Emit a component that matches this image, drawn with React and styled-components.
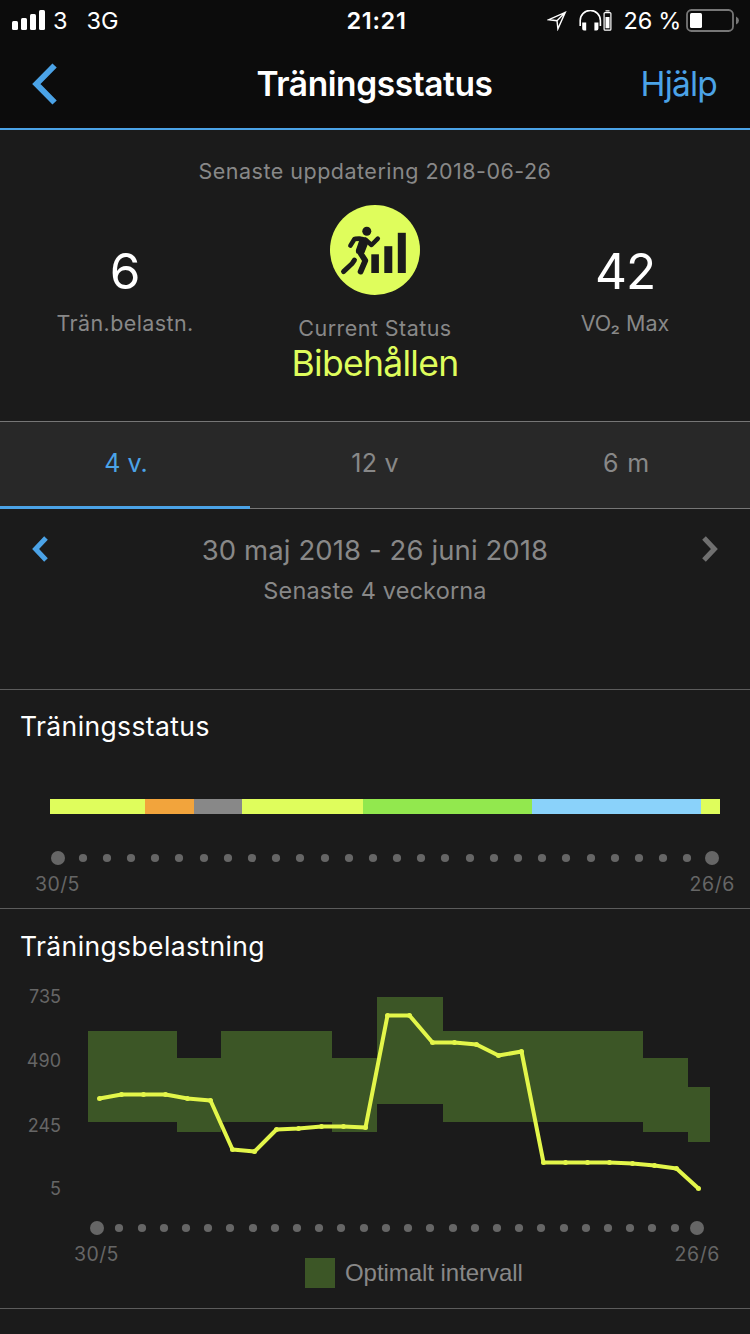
import React from "react";
import styled, { createGlobalStyle } from "styled-components";

const color = {
  page: "#1b1b1b",
  bar: "#0c0c0c",
  tab: "#282828",
  blue: "#4ba3e7",
  lime: "#dffd5c",
  grey: "#888888",
  dim: "#666666",
  line: "#5c5c5c",
  band: "#3c5626",
};

const GlobalStyle = createGlobalStyle`
  * { box-sizing: border-box; }
  body {
    margin: 0;
    background: ${color.page};
    font-family: Inter, "Liberation Sans", sans-serif;
    color: #fff;
  }
`;

const Screen = styled.main`
  display: flex;
  flex-direction: column;
  width: 750px;
  height: 1334px;
  overflow: hidden;
  background: ${color.page};
`;

const Text = styled.span`
  display: block;
  font-size: ${(p) => p.$size}px;
  line-height: ${(p) => p.$line}px;
  font-weight: ${(p) => p.$weight || 400};
  letter-spacing: ${(p) => p.$spacing || 0}px;
  color: ${(p) => p.$color || "#fff"};
  white-space: pre;
`;

const Header = styled.header`
  height: 130px;
  background: ${color.bar};
  border-bottom: 2px solid ${color.blue};
`;

const StatusBar = styled.div`
  display: grid;
  grid-template-columns: 1fr auto 1fr;
  height: 41px;
  padding: 0 11px 0 12px;
`;

const StatusSide = styled.div`
  display: flex;
  align-items: center;
  justify-content: ${(p) => (p.$end ? "flex-end" : "flex-start")};
`;

const Clock = styled(Text)`
  padding-left: 2px;
`;

const Signal = styled.svg`
  margin: 0 8px 2px 0;
`;

const Network = styled.div`
  margin-left: 19px;
`;

const LocationIcon = styled.svg`
  margin-right: 12px;
`;

const HeadphonesIcon = styled.svg`
  margin-right: 12px;
`;

const BatteryIcon = styled.svg`
  margin: 0 -1px 0 5px;
`;

const NavBar = styled.div`
  display: grid;
  grid-template-columns: 1fr auto 1fr;
  align-items: center;
  height: 86px;
  padding: 0 33px 0 32px;
`;

const NavEnd = styled.div`
  justify-self: end;
`;

const Summary = styled.section`
  height: 291px;
  padding-top: 25px;
  text-align: center;
`;

const Metrics = styled.div`
  display: grid;
  grid-template-columns: repeat(3, 250px);
`;

const Metric = styled.div`
  display: flex;
  flex-direction: column;
  align-items: center;
  padding-top: ${(p) => p.$top}px;
`;

const StatusBadge = styled.svg`
  margin-bottom: 20px;
`;

const Tabs = styled.nav`
  display: grid;
  grid-template-columns: repeat(3, 1fr);
  height: 88px;
  background: ${color.tab};
  border-top: 1px solid #767676;
  box-shadow: inset 0 -1px 0 #767676;
`;

const Tab = styled.div`
  display: flex;
  justify-content: center;
  padding-top: 21px;
  padding-left: ${(p) => p.$nudge || 0}px;
  border-bottom: 3px solid ${(p) => (p.$active ? color.blue : "transparent")};
`;

const Period = styled.section`
  display: grid;
  grid-template-columns: 48px 1fr 48px;
  height: 180px;
  padding: 21px 0 0;
`;

const PeriodArrow = styled.div`
  display: flex;
  justify-content: ${(p) => (p.$end ? "flex-start" : "flex-end")};
  padding-top: 6px;
`;

const PeriodLabel = styled.div`
  display: flex;
  flex-direction: column;
  align-items: center;
`;

const Panel = styled.section`
  height: ${(p) => p.$height}px;
  border-top: 1px solid ${color.line};
`;

const PanelTitle = styled.h2`
  margin: 0;
  padding: ${(p) => p.$top}px 0 0 20px;
  font-weight: 400;
`;

const StatusStrip = styled.div`
  display: flex;
  height: 15px;
  margin: 53px 30px 0 50px;
`;

const StripPart = styled.i`
  flex: ${(p) => p.$span} 0 0;
  background: ${(p) => p.$color};
`;

const Dots = styled.svg`
  display: block;
`;

const DateRange = styled.div`
  display: flex;
  justify-content: space-between;
  padding: ${(p) => p.$pad};
`;

const Plot = styled.div`
  display: flex;
  height: 222px;
  margin-top: 25px;
`;

const Axis = styled.div`
  display: flex;
  flex-direction: column;
  align-items: flex-end;
  gap: 40px;
  width: 61px;
  margin-top: -7px;
`;

const Legend = styled.div`
  display: flex;
  align-items: center;
  gap: 10px;
  margin: -11px 0 0 305px;
`;

const Swatch = styled.i`
  width: 30px;
  height: 30px;
  background: ${color.band};
`;

const LegendText = styled(Text)`
  font-family: "Liberation Sans", Arial, sans-serif;
`;

const strip = [
  [95, color.lime],
  [49, "#f2a43c"],
  [48, "#888888"],
  [121, color.lime],
  [169, "#92e84e"],
  [169, "#8ad2fa"],
  [19, color.lime],
];

const bands = [
  [88, 177, 1031, 1122],
  [177, 221, 1058, 1132],
  [221, 332, 1031, 1122],
  [332, 377, 1058, 1132],
  [377, 443, 997, 1104],
  [443, 643, 1031, 1122],
  [643, 688, 1058, 1132],
  [688, 710, 1087, 1142],
];

const load = [
  [99.5, 1098.5], [121.5, 1094.5], [143.5, 1094.5], [165.5, 1094.5], [187.5, 1098.5],
  [210.5, 1100.5], [232.5, 1149.5], [254.5, 1151.5], [276.5, 1129.5], [298.5, 1128.5],
  [321.5, 1126.5], [343.5, 1126.5], [365.5, 1127.5], [387.5, 1015.5], [409.5, 1015.5],
  [432.5, 1042.5], [454.5, 1042.5], [476.5, 1044.5], [498.5, 1055.5], [521.5, 1051.5],
  [543.5, 1162.5], [565.5, 1162.5], [587.5, 1162.5], [609.5, 1162.5], [632.5, 1163.5],
  [654.5, 1165.5], [676.5, 1168.5], [698.5, 1188.5],
];

function DayDots({ first, from, step, phase, last }) {
  return (
    <Dots width="750" height="14" fill={color.dim}>
      <circle cx={first} cy="7" r="7" />
      {Array.from({ length: 26 }, (_, i) => (
        <circle key={i} cx={from + Math.floor(i * step + phase)} cy="7" r="4.1" />
      ))}
      <circle cx={last} cy="7" r="7" />
    </Dots>
  );
}

function Status() {
  return (
    <StatusBar>
      <StatusSide>
        <Signal width="33" height="20" fill="#fff">
          <rect x="0" y="11" width="6" height="9" rx="1.5" />
          <rect x="9" y="8" width="6" height="12" rx="1.5" />
          <rect x="18" y="4" width="6" height="16" rx="1.5" />
          <rect x="27" y="0" width="6" height="20" rx="1.5" />
        </Signal>
        <Text $size={23.5} $line={41}>3</Text>
        <Network>
          <Text $size={23.5} $line={41}>3G</Text>
        </Network>
      </StatusSide>
      <Clock $size={23.5} $line={41} $weight={600} $spacing={0.7}>21:21</Clock>
      <StatusSide $end>
        <LocationIcon width="20" height="20" fill="none" stroke="#fff" strokeWidth="1.4">
          <path d="M18.3 1.3 1.8 8.7l8.2 1 .9 8.2z M18.3 1.3 10 9.7" strokeLinejoin="miter" />
        </LocationIcon>
        <HeadphonesIcon width="33" height="21">
          <path d="M1.2 16V10.5a9.8 9.8 0 0 1 20.2 0V16" fill="none" stroke="#fff" strokeWidth="1.6" />
          <path d="M3.2 12.5h4v8h-2.2q-1.8 0-1.8-2zM19.4 12.5h-4v8h2.2q1.8 0 1.8-2z" fill="#fff" />
          <rect x="25.1" y="2.6" width="6.8" height="17.6" rx="1" fill="none" stroke="#fff" strokeWidth="1.2" />
          <path d="M26.5 7h4v11.3h-4zM26.5 .3h4v1.3h-4z" fill="#fff" />
        </HeadphonesIcon>
        <Text $size={23.5} $line={41} $spacing={-0.3}>26 %</Text>
        <BatteryIcon width="54" height="24">
          <rect x="1" y="1" width="46" height="21" rx="4.5" fill="none" stroke="#777" strokeWidth="1.8" />
          <rect x="4" y="4" width="12" height="15" rx="1.5" fill="#fff" />
          <path d="M50 7.5q3 1.5 3 4t-3 4z" fill="#777" />
        </BatteryIcon>
      </StatusSide>
    </StatusBar>
  );
}

function Chevron({ w, h, path, width, stroke }) {
  return (
    <svg width={w} height={h} fill="none" stroke={stroke} strokeWidth={width}>
      <path d={path} />
    </svg>
  );
}

function Badge() {
  return (
    <StatusBadge width="90" height="90" viewBox="0 0 90 90">
      <circle cx="45" cy="45" r="45" fill={color.lime} />
      <g fill={color.page}>
        <circle cx="36.8" cy="26.3" r="4.5" />
        <path d="M24.5 31.8q6.5-1 11.5 1 3.6 1.8 2.4 5L34.4 48l-7.8.5q-1.6-2.6.2-6l2.2-6.5z" />
        <rect x="41.3" y="49.3" width="7.6" height="18.7" />
        <rect x="54.3" y="41.2" width="8" height="26.8" />
        <rect x="67.8" y="27.8" width="8" height="40.2" />
      </g>
      <g fill="none" stroke={color.page} strokeLinecap="round" strokeLinejoin="round">
        <path d="M20.4 40.6l4.1-6.6 5.5-.2" strokeWidth="4.6" />
        <path d="M35.5 34.7l6 5.3 6.3-6.3" strokeWidth="4.5" />
        <path d="M29.8 47l5.5 8.6-4.7 11" strokeWidth="5.8" />
        <path d="M24.5 55l-2.6 3.8-8.4 7.8" strokeWidth="4.9" />
      </g>
    </StatusBadge>
  );
}

export default function App() {
  return (
    <Screen>
      <GlobalStyle />
      <Header>
        <Status />
        <NavBar>
          <Chevron w={26} h={42} path="M22.6 2.5 4.4 21l18.2 18.5" width={6} stroke={color.blue} />
          <Text $size={33.5} $line={60} $weight={600} $spacing={-0.42}>Träningsstatus</Text>
          <NavEnd>
            <Text $size={33.5} $line={60} $spacing={-0.8} $color={color.blue}>Hjälp</Text>
          </NavEnd>
        </NavBar>
      </Header>

      <Summary>
        <Text $size={21.5} $line={32} $spacing={0.49} $color={color.grey}>Senaste uppdatering 2018-06-26</Text>
        <Metrics>
          <Metric $top={54}>
            <Text $size={49.5} $line={60}>6</Text>
            <Text $size={21.5} $line={45} $spacing={0.4} $color={color.grey}>Trän.belastn.</Text>
          </Metric>
          <Metric $top={18}>
            <Badge />
            <Text $size={21.5} $line={27} $spacing={0.45} $color={color.grey}>Current Status</Text>
            <Text $size={35.5} $line={44} $spacing={-0.7} $color={color.lime}>Bibehållen</Text>
          </Metric>
          <Metric $top={54}>
            <Text $size={49.5} $line={60} $spacing={-1}>42</Text>
            <Text $size={21.5} $line={45} $color={color.grey}>VO₂ Max</Text>
          </Metric>
        </Metrics>
      </Summary>

      <Tabs>
        <Tab $active $nudge={2}>
          <Text $size={25} $line={40} $color={color.blue}>4 v.</Text>
        </Tab>
        <Tab>
          <Text $size={25} $line={40} $spacing={0.2} $color={color.grey}>12 v</Text>
        </Tab>
        <Tab $nudge={3}>
          <Text $size={25} $line={40} $spacing={0.8} $color={color.grey}>6 m</Text>
        </Tab>
      </Tabs>

      <Period>
        <PeriodArrow>
          <Chevron w={16} h={26} path="M14 2 3.6 13l10.4 11" width={5} stroke={color.blue} />
        </PeriodArrow>
        <PeriodLabel>
          <Text $size={27.5} $line={41} $spacing={0.1} $color={color.grey}>30 maj 2018 - 26 juni 2018</Text>
          <Text $size={23.5} $line={40} $spacing={0.16} $color={color.grey}>Senaste 4 veckorna</Text>
        </PeriodLabel>
        <PeriodArrow $end>
          <Chevron w={16} h={26} path="M2 2l10.4 11L2 24" width={5} stroke="#707070" />
        </PeriodArrow>
      </Period>

      <Panel $height={219}>
        <PanelTitle $top={16}>
          <Text $size={26.5} $line={40} $spacing={0.38}>Träningsstatus</Text>
        </PanelTitle>
        <StatusStrip>
          {strip.map(([span, fill], i) => (
            <StripPart key={i} $span={span} $color={fill} />
          ))}
        </StatusStrip>
        <DateRange $pad="37px 0 0">
          <DayDots first={58} from={83} step={24.1905} phase={0.1} last={712} />
        </DateRange>
        <DateRange $pad="4px 15px 0 35px">
          <Text $size={19.5} $line={30} $spacing={0.4} $color={color.dim}>30/5</Text>
          <Text $size={19.5} $line={30} $spacing={0.6} $color={color.dim}>26/6</Text>
        </DateRange>
      </Panel>

      <Panel $height={400}>
        <PanelTitle $top={17}>
          <Text $size={26.5} $line={41} $spacing={0.38}>Träningsbelastning</Text>
        </PanelTitle>
        <Plot>
          <Axis>
            <Text $size={18} $line={24} $color={color.dim}>735</Text>
            <Text $size={18} $line={24} $color={color.dim}>490</Text>
            <Text $size={18} $line={25} $color={color.dim}>245</Text>
            <Text $size={18} $line={22} $color={color.dim}>5</Text>
          </Axis>
          <svg width="689" height="222" viewBox="61 992 689 222">
            {bands.map(([x0, x1, y0, y1]) => (
              <rect key={x0} x={x0} y={y0} width={x1 - x0} height={y1 - y0} fill={color.band} shapeRendering="crispEdges" />
            ))}
            <polyline points={load.join(" ")} fill="none" stroke="#e3f64a" strokeWidth="4" strokeLinejoin="round" />
            {load.map(([x, y]) => (
              <circle key={x} cx={x} cy={y} r="2.5" fill="#e3f64a" />
            ))}
          </svg>
        </Plot>
        <DateRange $pad="7px 0 0">
          <DayDots first={97} from={119} step={22.214} phase={0.792} last={697} />
        </DateRange>
        <DateRange $pad="4px 30px 0 74px">
          <Text $size={19.5} $line={30} $spacing={0.4} $color={color.dim}>30/5</Text>
          <Text $size={19.5} $line={30} $spacing={0.6} $color={color.dim}>26/6</Text>
        </DateRange>
        <Legend>
          <Swatch />
          <LegendText $size={24} $line={30} $spacing={-0.05} $color={color.grey}>Optimalt intervall</LegendText>
        </Legend>
      </Panel>
      <Panel $height={25} />
    </Screen>
  );
}
